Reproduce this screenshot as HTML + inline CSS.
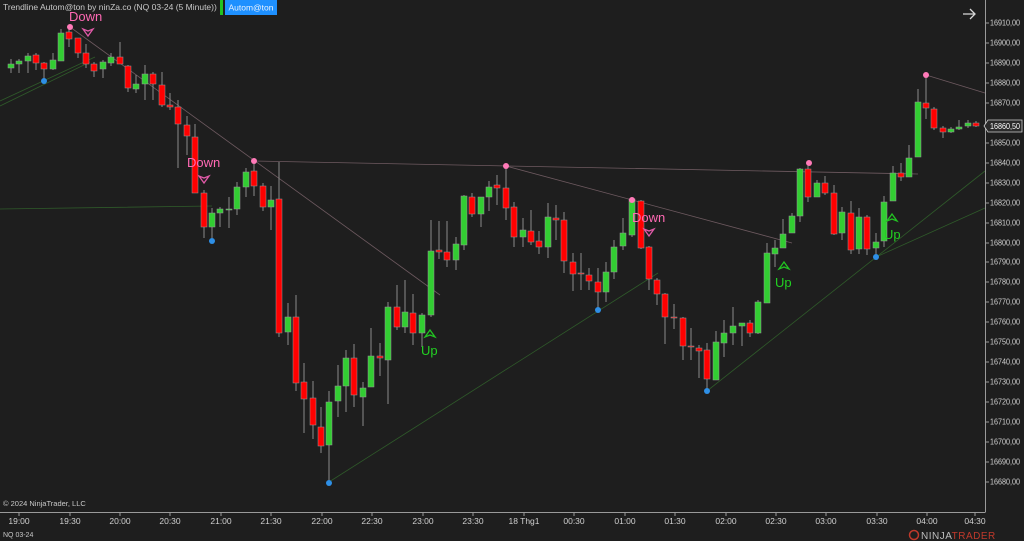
<!DOCTYPE html>
<html><head><meta charset="utf-8"><style>
html,body{margin:0;padding:0;background:#1e1e1e;}
body{width:1024px;height:541px;overflow:hidden;position:relative;font-family:"Liberation Sans",sans-serif;}
svg{position:absolute;left:0;top:0;}
.g rect{fill:#32cd32;stroke:#9a9a9a;stroke-width:0.5}
.r rect{fill:#ff0000;stroke:#9a9a9a;stroke-width:0.5}
text{font-family:"Liberation Sans",sans-serif;}
</style></head><body>
<svg width="1024" height="541" viewBox="0 0 1024 541">
<rect width="1024" height="541" fill="#1e1e1e"/>
<g stroke="#2f5a2a" stroke-width="0.8" fill="none">
<path d="M0 101L95 57M0 106L90 62M0 209L212 206M329 482L658 273M707 391L985 171M876 257L985 208"/>
</g>
<g stroke="#6e5a60" stroke-width="0.8" fill="none">
<path d="M70 27L440 295M254 161L918 174M506 166L792 243M926 75L985 93"/>
</g>
<path stroke="#8a8a8a" stroke-width="1" fill="none" d="M11 59V73M19 59V73M28 53V73M36 53V70M44 62V79M53 53V70M61 29V61M69 27V47M78 38V58M86 44V68M94 62V77M103 60V78M111 53V66M120 42V64M128 65V92M136 75V93M145 65V100M153 72V100M162 72V107M170 93V110M178 100V168M187 116V155M195 124V193M204 190V238M212 208V238M220 207V227M229 197V228M237 182V215M246 168V197M254 164V196M263 183V211M271 186V230M279 162V337M288 303V345M296 295V391M304 363V433M313 381V439M321 407V453M329 391V482M338 365V417M346 350V412M354 344V407M363 382V426M371 328V387M380 343V376M388 302V404M397 285V330M405 280V333M413 294V345M422 313V347M431 220V317M439 221V259M447 221V267M456 237V270M464 195V250M472 193V217M481 197V227M489 181V211M497 175V205M506 167V220M514 202V247M523 218V247M531 210V245M539 231V254M548 203V258M556 205V240M564 212V273M573 253V291M581 253V290M589 268V290M598 268V310M606 262V302M614 240V279M623 218V250M632 197V237M641 200V249M649 246V290M657 278V305M665 293V344M674 304V329M683 317V360M691 328V360M699 345V378M707 343V390M716 331V380M724 320V357M733 307V345M742 323V346M750 320V337M758 300V334M767 243V303M775 240V267M783 219V248M792 213V233M800 168V222M808 166V202M817 180V197M825 176V195M834 185V235M842 207V240M851 201V254M859 208V254M867 215V255M876 233V257M884 196V247M893 166V201M901 163V181M909 145V177M918 89V157M926 75V119M934 107V130M943 126V138M951 127V133M959 120V130M968 120V128M976 121V127"/>
<g class="g">
<rect x="8" y="64" width="6" height="4"/><rect x="16" y="61" width="6" height="3"/><rect x="25" y="56" width="6" height="5"/><rect x="50" y="60" width="6" height="9"/><rect x="58" y="33" width="6" height="28"/><rect x="100" y="62" width="6" height="7"/><rect x="108" y="57" width="6" height="6"/><rect x="133" y="84" width="6" height="5"/><rect x="142" y="74" width="6" height="10"/><rect x="209" y="213" width="6" height="14"/><rect x="217" y="209" width="6" height="4"/><rect x="226" y="209" width="6" height="1"/><rect x="234" y="187" width="6" height="22"/><rect x="243" y="172" width="6" height="15"/><rect x="268" y="200" width="6" height="7"/><rect x="285" y="317" width="6" height="15"/><rect x="326" y="402" width="6" height="43"/><rect x="335" y="386" width="6" height="15"/><rect x="343" y="358" width="6" height="28"/><rect x="360" y="388" width="6" height="9"/><rect x="368" y="356" width="6" height="31"/><rect x="385" y="307" width="6" height="53"/><rect x="402" y="312" width="6" height="15"/><rect x="419" y="315" width="6" height="18"/><rect x="428" y="251" width="6" height="64"/><rect x="453" y="244" width="6" height="16"/><rect x="461" y="196" width="6" height="49"/><rect x="478" y="197" width="6" height="17"/><rect x="486" y="187" width="6" height="10"/><rect x="520" y="230" width="6" height="7"/><rect x="545" y="217" width="6" height="30"/><rect x="603" y="272" width="6" height="20"/><rect x="611" y="247" width="6" height="25"/><rect x="620" y="233" width="6" height="13"/><rect x="629" y="199" width="6" height="36"/><rect x="713" y="342" width="6" height="38"/><rect x="721" y="333" width="6" height="10"/><rect x="730" y="326" width="6" height="7"/><rect x="739" y="323" width="6" height="3"/><rect x="755" y="302" width="6" height="31"/><rect x="764" y="253" width="6" height="50"/><rect x="772" y="248" width="6" height="6"/><rect x="780" y="234" width="6" height="14"/><rect x="789" y="216" width="6" height="17"/><rect x="797" y="169" width="6" height="47"/><rect x="814" y="183" width="6" height="14"/><rect x="839" y="212" width="6" height="21"/><rect x="856" y="217" width="6" height="32"/><rect x="873" y="242" width="6" height="6"/><rect x="881" y="202" width="6" height="39"/><rect x="890" y="173" width="6" height="28"/><rect x="906" y="158" width="6" height="19"/><rect x="915" y="102" width="6" height="55"/><rect x="948" y="129" width="6" height="3"/><rect x="956" y="127" width="6" height="2"/><rect x="965" y="123" width="6" height="3"/>
</g>
<g class="r">
<rect x="33" y="55" width="6" height="8"/><rect x="41" y="63" width="6" height="6"/><rect x="66" y="32" width="6" height="7"/><rect x="75" y="38" width="6" height="15"/><rect x="83" y="53" width="6" height="11"/><rect x="91" y="64" width="6" height="7"/><rect x="117" y="57" width="6" height="7"/><rect x="125" y="66" width="6" height="22"/><rect x="150" y="74" width="6" height="10"/><rect x="159" y="85" width="6" height="20"/><rect x="167" y="105" width="6" height="2"/><rect x="175" y="107" width="6" height="17"/><rect x="184" y="125" width="6" height="11"/><rect x="192" y="137" width="6" height="56"/><rect x="201" y="193" width="6" height="34"/><rect x="251" y="171" width="6" height="15"/><rect x="260" y="186" width="6" height="21"/><rect x="276" y="199" width="6" height="134"/><rect x="293" y="317" width="6" height="66"/><rect x="301" y="382" width="6" height="17"/><rect x="310" y="398" width="6" height="27"/><rect x="318" y="427" width="6" height="19"/><rect x="351" y="358" width="6" height="37"/><rect x="377" y="356" width="6" height="2"/><rect x="394" y="307" width="6" height="20"/><rect x="410" y="313" width="6" height="20"/><rect x="436" y="250" width="6" height="2"/><rect x="444" y="252" width="6" height="8"/><rect x="469" y="197" width="6" height="17"/><rect x="494" y="185" width="6" height="3"/><rect x="503" y="188" width="6" height="20"/><rect x="511" y="207" width="6" height="30"/><rect x="528" y="231" width="6" height="11"/><rect x="536" y="241" width="6" height="6"/><rect x="553" y="218" width="6" height="2"/><rect x="561" y="220" width="6" height="41"/><rect x="570" y="262" width="6" height="12"/><rect x="578" y="273" width="6" height="1"/><rect x="586" y="275" width="6" height="6"/><rect x="595" y="282" width="6" height="10"/><rect x="638" y="201" width="6" height="47"/><rect x="646" y="247" width="6" height="32"/><rect x="654" y="280" width="6" height="14"/><rect x="662" y="294" width="6" height="23"/><rect x="671" y="317" width="6" height="1"/><rect x="680" y="318" width="6" height="28"/><rect x="688" y="346" width="6" height="1"/><rect x="696" y="348" width="6" height="3"/><rect x="704" y="350" width="6" height="29"/><rect x="747" y="323" width="6" height="10"/><rect x="805" y="169" width="6" height="28"/><rect x="822" y="183" width="6" height="10"/><rect x="831" y="193" width="6" height="41"/><rect x="848" y="213" width="6" height="37"/><rect x="864" y="217" width="6" height="32"/><rect x="898" y="173" width="6" height="4"/><rect x="923" y="103" width="6" height="5"/><rect x="931" y="109" width="6" height="19"/><rect x="940" y="128" width="6" height="4"/><rect x="973" y="123" width="6" height="3"/>
</g>
<g fill="#ff7ab8"><circle cx="70" cy="27" r="3"/><circle cx="254" cy="161" r="3"/><circle cx="506" cy="166" r="3"/><circle cx="632" cy="200" r="3"/><circle cx="809" cy="163" r="3"/><circle cx="926" cy="75" r="3"/></g>
<g fill="#2e8fe6"><circle cx="44" cy="81" r="3"/><circle cx="212" cy="241" r="3"/><circle cx="329" cy="483" r="3"/><circle cx="598" cy="310" r="3"/><circle cx="707" cy="391" r="3"/><circle cx="876" cy="257" r="3"/></g>
<g fill="#ff69b4" font-size="13">
<text x="69" y="21">Down</text><text x="187" y="167">Down</text><text x="632" y="222">Down</text>
</g>
<g fill="none" stroke="#e05aa8" stroke-width="1.3">
<path d="M83 29L88 36L93 29L88 31Z"/><path d="M199 176L204 183L209 176L204 178Z"/><path d="M644 229L649 236L654 229L649 231Z"/>
</g>
<g fill="none" stroke="#22c322" stroke-width="1.3">
<path d="M425 337L430 330L435 337L430 335Z"/><path d="M779 269L784 262L789 269L784 267Z"/><path d="M887 221L892 214L897 221L892 219Z"/>
</g>
<g fill="#22d022" font-size="13">
<text x="421" y="355">Up</text><text x="775" y="287">Up</text><text x="884" y="239">Up</text>
</g>
<path d="M985.5 0V512M0 512.5H985.5" stroke="#9a9a9a" stroke-width="1" fill="none"/>
<g stroke="#9a9a9a" stroke-width="1">
<path d="M985 23H989M985 43H989M985 63H989M985 83H989M985 103H989M985 123H989M985 143H989M985 163H989M985 183H989M985 203H989M985 223H989M985 243H989M985 262H989M985 282H989M985 302H989M985 322H989M985 342H989M985 362H989M985 382H989M985 402H989M985 422H989M985 442H989M985 462H989M985 482H989"/>
<path d="M19 512V516M70 512V516M120 512V516M170 512V516M221 512V516M271 512V516M322 512V516M372 512V516M423 512V516M473 512V516M524 512V516M574 512V516M625 512V516M675 512V516M726 512V516M776 512V516M826 512V516M877 512V516M927 512V516M975 512V516"/>
</g>
<g fill="#d0d0d0" font-size="8.5" dominant-baseline="middle" textLength="30" lengthAdjust="spacingAndGlyphs">
<text x="990" y="23" textLength="30" lengthAdjust="spacingAndGlyphs">16910,00</text><text x="990" y="43" textLength="30" lengthAdjust="spacingAndGlyphs">16900,00</text><text x="990" y="63" textLength="30" lengthAdjust="spacingAndGlyphs">16890,00</text><text x="990" y="83" textLength="30" lengthAdjust="spacingAndGlyphs">16880,00</text><text x="990" y="103" textLength="30" lengthAdjust="spacingAndGlyphs">16870,00</text><text x="990" y="143" textLength="30" lengthAdjust="spacingAndGlyphs">16850,00</text><text x="990" y="163" textLength="30" lengthAdjust="spacingAndGlyphs">16840,00</text><text x="990" y="183" textLength="30" lengthAdjust="spacingAndGlyphs">16830,00</text><text x="990" y="203" textLength="30" lengthAdjust="spacingAndGlyphs">16820,00</text><text x="990" y="223" textLength="30" lengthAdjust="spacingAndGlyphs">16810,00</text><text x="990" y="243" textLength="30" lengthAdjust="spacingAndGlyphs">16800,00</text><text x="990" y="262" textLength="30" lengthAdjust="spacingAndGlyphs">16790,00</text><text x="990" y="282" textLength="30" lengthAdjust="spacingAndGlyphs">16780,00</text><text x="990" y="302" textLength="30" lengthAdjust="spacingAndGlyphs">16770,00</text><text x="990" y="322" textLength="30" lengthAdjust="spacingAndGlyphs">16760,00</text><text x="990" y="342" textLength="30" lengthAdjust="spacingAndGlyphs">16750,00</text><text x="990" y="362" textLength="30" lengthAdjust="spacingAndGlyphs">16740,00</text><text x="990" y="382" textLength="30" lengthAdjust="spacingAndGlyphs">16730,00</text><text x="990" y="402" textLength="30" lengthAdjust="spacingAndGlyphs">16720,00</text><text x="990" y="422" textLength="30" lengthAdjust="spacingAndGlyphs">16710,00</text><text x="990" y="442" textLength="30" lengthAdjust="spacingAndGlyphs">16700,00</text><text x="990" y="462" textLength="30" lengthAdjust="spacingAndGlyphs">16690,00</text><text x="990" y="482" textLength="30" lengthAdjust="spacingAndGlyphs">16680,00</text>
</g>
<path d="M984 126L988 120H1022V132H988Z" fill="#2b2b2b" stroke="#cfcfcf" stroke-width="0.8"/>
<text x="990" y="126.5" fill="#ffffff" font-size="8.5" dominant-baseline="middle" textLength="30" lengthAdjust="spacingAndGlyphs">16860,50</text>
<g fill="#d0d0d0" font-size="8.5" text-anchor="middle">
<text x="19" y="524">19:00</text><text x="70" y="524">19:30</text><text x="120" y="524">20:00</text><text x="170" y="524">20:30</text><text x="221" y="524">21:00</text><text x="271" y="524">21:30</text><text x="322" y="524">22:00</text><text x="372" y="524">22:30</text><text x="423" y="524">23:00</text><text x="473" y="524">23:30</text><text x="524" y="524">18 Thg1</text><text x="574" y="524">00:30</text><text x="625" y="524">01:00</text><text x="675" y="524">01:30</text><text x="726" y="524">02:00</text><text x="776" y="524">02:30</text><text x="826" y="524">03:00</text><text x="877" y="524">03:30</text><text x="927" y="524">04:00</text><text x="975" y="524">04:30</text>
</g>
<text x="3" y="506" fill="#c8c8c8" font-size="7.5">© 2024 NinjaTrader, LLC</text>
<text x="3" y="537" fill="#c8c8c8" font-size="7">NQ 03-24</text>
<text x="3" y="10" fill="#c8c8c8" font-size="8.5">Trendline Autom@ton by ninZa.co (NQ 03-24 (5 Minute))</text>
<rect x="220" y="0" width="3" height="15" fill="#22c322"/>
<rect x="225" y="0" width="52" height="15" fill="#1e90ff"/>
<text x="251" y="10.5" fill="#e8f2ff" font-size="8.5" text-anchor="middle">Autom@ton</text>
<path d="M963 14H975M970 9L975 14L970 19" stroke="#d8d8d8" stroke-width="1.3" fill="none"/>
<circle cx="914" cy="535" r="4.5" fill="none" stroke="#c0392b" stroke-width="1.5"/>
<text x="921" y="539" fill="#bdbdbd" font-size="10" letter-spacing="0.5">NINJA<tspan fill="#c0392b">TRADER</tspan></text>
</svg>
</body></html>
